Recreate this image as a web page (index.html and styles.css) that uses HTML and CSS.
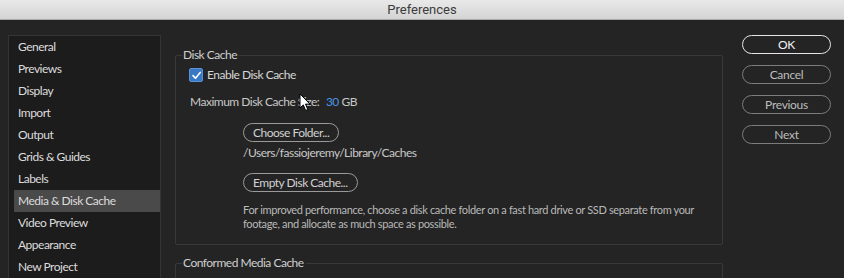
FILE: index.html
```html
<!DOCTYPE html>
<html lang="en">
<head>
<meta charset="UTF-8" />
<title>Preferences</title>
<link rel="stylesheet" href="styles.css">
</head>
<body>
<div class="titlebar">Preferences</div>

<div class="window">
  <ul class="nav">
    <li>General</li>
    <li>Previews</li>
    <li>Display</li>
    <li>Import</li>
    <li>Output</li>
    <li>Grids &amp; Guides</li>
    <li>Labels</li>
    <li class="active">Media &amp; Disk Cache</li>
    <li>Video Preview</li>
    <li>Appearance</li>
    <li>New Project</li>
  </ul>

  <div class="panes">
    <fieldset class="group">
      <legend>Disk Cache</legend>
      <label class="check">
        <span class="box">
          <svg width="11" height="11" viewBox="0 0 11 11"><path d="M2 5.6 L4.5 8.2 L9.2 2.4" fill="none" stroke="#fff" stroke-width="1.6" stroke-linecap="round" stroke-linejoin="round"/></svg>
        </span>
        Enable Disk Cache
      </label>
      <div class="size">Maximum Disk Cache Size: <span class="num">30</span> GB</div>
      <div class="indent">
        <button class="pill">Choose Folder...</button>
        <div class="path">/Users/fassiojeremy/Library/Caches</div>
        <button class="pill second">Empty Disk Cache...</button>
        <p class="note">For improved performance, choose a disk cache folder on a fast hard drive or SSD separate from your footage, and allocate as much space as possible.</p>
      </div>
    </fieldset>

    <fieldset class="group next-group">
      <legend>Conformed Media Cache</legend>
    </fieldset>
  </div>

  <div class="actions">
    <button class="action primary">OK</button>
    <button class="action">Cancel</button>
    <button class="action">Previous</button>
    <button class="action">Next</button>
  </div>

  <!-- mouse pointer sitting over the size label -->
  <svg class="cursor" width="13" height="19" viewBox="0 0 13 19">
    <path d="M1 1 L1 15 L4.3 11.9 L6.6 17.4 L8.8 16.5 L6.5 11.1 L11 11.1 Z" fill="#fff" stroke="#000" stroke-width="1" stroke-linejoin="round"/>
  </svg>
</div>
</body>
</html>
```

FILE: styles.css
```css
html, body {
  margin: 0;
  height: 100%;
  overflow: hidden;
}
body {
  background: #242424;
  color: #ccc;
  font-family: Lato, 'Noto Sans', sans-serif;
  font-size: 12px;
  letter-spacing: -0.5px;
}
.titlebar {
  height: 19px;
  line-height: 19px;
  text-align: center;
  font-family: Roboto, 'Noto Sans', sans-serif;
  font-size: 13px;
  letter-spacing: 0;
  color: #3b3b3b;
  background: linear-gradient(#e9e9e9, #d4d4d4);
  border-bottom: 1px solid #a9a9a9;
}
.window {
  position: relative;
  display: flex;
  align-items: flex-start;
  padding: 15px 13px 0 8px;
}
.nav {
  list-style: none;
  margin: 0;
  padding: 0 0 0 5px;
  width: 146px;
  height: 260px;
  background: #1c1c1c;
  border: 1px solid #343434;
  flex-shrink: 0;
}
.nav li {
  height: 22px;
  line-height: 22px;
  padding-left: 4px;
  color: #dcdcdc;
  white-space: nowrap;
}
.nav li.active {
  background: #4a4a4a;
}
.panes {
  margin: 13px 0 0 14px;
  width: 548px;
  flex-shrink: 0;
}
.group {
  margin: 0;
  padding: 0 0 13px 6px;
  border: 1px solid #393939;
  border-radius: 2px;
}
.group legend {
  padding: 0 2px 0 1px;
  line-height: 14px;
  color: #cfcfcf;
}
.next-group {
  margin-top: 11px;
  height: 40px;
}
.check {
  display: flex;
  align-items: center;
  margin: 5px 0 0 7px;
  line-height: 16px;
  color: #d6d6d6;
}
.box {
  display: inline-flex;
  align-items: center;
  justify-content: center;
  width: 12px;
  height: 12px;
  margin-right: 4px;
  background: #3978c3;
  border: 1px solid #5a93d6;
  border-radius: 2px;
}
.size {
  margin: 11px 0 0 8px;
  line-height: 16px;
  color: #c8c8c8;
}
.num {
  color: #4c94e6;
  margin-left: 4px;
}
.indent {
  padding-left: 61px;
}
.pill {
  display: block;
  margin-top: 13px;
  height: 19px;
  padding: 0 9px;
  font-family: inherit;
  font-size: 12px;
  letter-spacing: -0.5px;
  color: #d2d2d2;
  background: transparent;
  border: 1.5px solid #9a9a9a;
  border-radius: 10px;
}
.pill.second {
  margin-top: 12px;
}
.path {
  margin-top: 3px;
  line-height: 16px;
  color: #c8c8c8;
}
.note {
  margin: 11px 0 0;
  width: 470px;
  line-height: 14px;
  font-size: 11px;
  letter-spacing: -0.35px;
  color: #b9b9b9;
}
.actions {
  margin-left: 19px;
  display: flex;
  flex-direction: column;
  gap: 11px;
}
.action {
  width: 89px;
  height: 19px;
  font-family: inherit;
  font-size: 12px;
  letter-spacing: -0.3px;
  color: #bdbdbd;
  background: transparent;
  border: 1.5px solid #7c7c7c;
  border-radius: 10px;
}
.action.primary {
  color: #f4f4f4;
  border-color: #e6e6e6;
}
.cursor {
  position: absolute;
  left: 299px;
  top: 73px;
}
```
